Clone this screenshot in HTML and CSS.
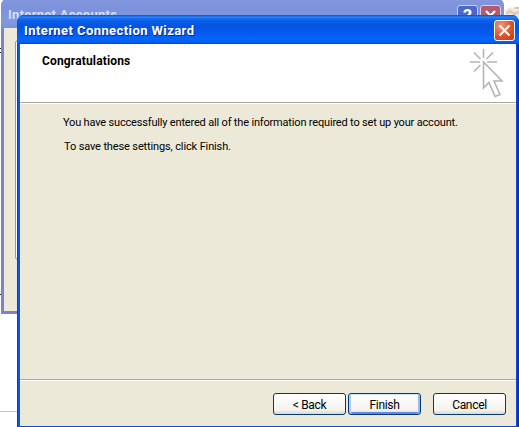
FILE: index.html
```
<!DOCTYPE html>
<html lang="en">
<head>
    <meta charset="UTF-8">
    <title>Internet Connection Wizard</title>
    <link rel="stylesheet" href="styles.css">
</head>
<body>
    <div class="desktop">
        <div class="desktop__mark desktop__mark--top"></div>
        <div class="desktop__mark desktop__mark--mid"></div>
        <div class="desktop__rule"></div>
        <svg class="desktop__icon" width="17" height="18" viewBox="0 0 17 18">
            <path d="M0 8 L6 4 L12 7 L17 3 V14 H4 Z" fill="#f0e6d8"/>
            <path d="M2 11 L6 8 L10 11 L17 8 M10 5 L17 5" stroke="#d6c9b6" stroke-width="2" fill="none"/>
        </svg>

        <div class="window window--back">
            <div class="titlebar titlebar--inactive">
                <span class="titlebar__text">Internet Accounts</span>
                <span class="caption caption--help">?</span>
                <span class="caption caption--dim">
                    <svg width="19" height="19" viewBox="0 0 19 19"><path d="M5 5 L14 14 M14 5 L5 14" stroke="#fff" stroke-width="2.2"/></svg>
                </span>
            </div>
            <div class="accounts">
                <div class="accounts__tab"></div>
            </div>
        </div>

        <div class="window window--front">
            <div class="titlebar">
                <span class="titlebar__text">Internet Connection Wizard</span>
                <span class="caption caption--close">
                    <svg width="19" height="19" viewBox="0 0 19 19"><path d="M4.5 4.5 L14.5 14.5 M14.5 4.5 L4.5 14.5" stroke="#fff" stroke-width="2"/></svg>
                </span>
            </div>
            <div class="header">
                <h1 class="header__title">Congratulations</h1>
                <svg class="header__icon" width="34" height="50" viewBox="0 0 34 50" fill="none" stroke="#b4b4b4" stroke-width="1.6">
                    <path d="M13.5 0 V9 M0 13 H10 M17 13 H27 M4 3.5 L10.5 10 M23 3.5 L16.5 10 M4 22.5 L10.5 16"/>
                    <path d="M13.5 13 V39 L19 33.5 L25 47.5 L30 45.5 L24 32 H32 Z"/>
                </svg>
            </div>
            <div class="content">
                <p class="content__text content__text--first">You have successfully entered all of the information required to set up your account.</p>
                <p class="content__text content__text--save">To save these settings, click Finish.</p>
            </div>
            <div class="footer">
                <button class="button">&lt; Back</button>
                <button class="button button--default">Finish</button>
                <button class="button button--cancel">Cancel</button>
            </div>
        </div>
    </div>
</body>
</html>
```

FILE: styles.css
```
*, *::before, *::after {
    box-sizing: border-box;
}
body {
    margin: 0;
    background-color: #fff;
    font-family: Roboto, "Liberation Sans", sans-serif;
    font-size: 11px;
    color: #000;
}
.desktop {
    position: relative;
    width: 519px;
    height: 427px;
    overflow: hidden;
}
.desktop__mark {
    position: absolute;
    left: 0;
    width: 2px;
    height: 1px;
    background-color: #202030;
}
.desktop__mark--top {
    top: 48px;
    height: 5px;
    border-top: 1px solid #202030;
    border-bottom: 1px solid #202030;
    background-color: #fff;
}
.desktop__mark--mid {
    top: 294px;
}
.desktop__rule {
    position: absolute;
    left: 0;
    top: 411px;
    width: 17px;
    height: 1px;
    background-color: #c4c4c4;
}
.desktop__icon {
    position: absolute;
    left: 504px;
    top: 3px;
}
.window {
    position: absolute;
    display: flex;
    flex-direction: column;
}
.window--back {
    left: 1px;
    top: -2px;
    width: 503px;
    height: 316px;
    border: 3px solid #7b83cc;
    border-top: none;
    border-radius: 8px 8px 0 0;
    background-color: #7b83cc;
}
.window--front {
    left: 17px;
    top: 15px;
    width: 502px;
    height: 412px;
    padding: 0 3px 1px;
    border-radius: 7px 7px 0 0;
    background: linear-gradient(to right, #0831b8 0, #0a4bd8 1px, #1560e6 2px, #0a4bd0 3px, #0a4bd0 499px, #1244c8 500px, #0023a0 502px);
}
.titlebar {
    display: flex;
    align-items: center;
    height: 29px;
    flex-shrink: 0;
    margin: 0 -3px;
    padding: 2px 4px 0 7px;
    border-radius: 7px 7px 0 0;
    background: linear-gradient(#0a4ccc 0, #2a83f8 2px, #0b62ea 5px, #0554e0 10px, #0459ec 18px, #0366fb 24px, #0360f2 27px, #0048d0 29px);
}
.titlebar__text {
    flex: 1;
    padding-top: 1px;
    font-size: 13px;
    font-weight: bold;
    letter-spacing: 0.42px;
    line-height: 16px;
    white-space: nowrap;
    color: #fff;
    text-shadow: 1px 1px 0 #0a2a90;
}
.titlebar--inactive {
    align-items: flex-start;
    height: 30px;
    padding: 7px 3px 0 7px;
    border-radius: 8px 8px 0 0;
    background: linear-gradient(#8398dd, #7c92dc 12px, #8299e0 24px, #7b90d8);
}
.titlebar--inactive .titlebar__text {
    padding-top: 2px;
    letter-spacing: 0.28px;
    color: #d5e0f8;
    text-shadow: none;
}
.caption {
    display: flex;
    align-items: center;
    justify-content: center;
    width: 21px;
    height: 21px;
    border: 1px solid #fff;
    border-radius: 3px;
}
.caption--close {
    background: radial-gradient(circle at 30% 25%, #ee9878, #dd5130 55%, #c03b16);
}
.caption--help {
    margin-right: 2px;
    border-color: #c8d2f2;
    background-color: #4d68c8;
    color: #fff;
    font-size: 18px;
    font-weight: bold;
}
.caption--dim {
    border-color: #d8cfe8;
    background-color: #b25a70;
}
.accounts {
    flex: 1;
    padding: 12px 11px;
    background-color: #ece9d8;
}
.accounts__tab {
    height: 220px;
    border: 1px solid #919b9c;
    border-radius: 3px;
    background-color: #fcfcfa;
}
.header {
    display: flex;
    justify-content: space-between;
    flex-shrink: 0;
    height: 59px;
    padding: 5px 12px 0 22px;
    border-bottom: 1px solid #aca899;
    background-color: #fff;
}
.header__title {
    margin: 4px 0 0;
    font-size: 12px;
    font-weight: bold;
    line-height: 16px;
    letter-spacing: 0.15px;
}
.content {
    flex: 1;
    padding: 11px 43px 0;
    border-top: 1px solid #fff;
    background-color: #ece9d8;
}
.content__text {
    margin: 0 0 8px;
    line-height: 16px;
    white-space: nowrap;
}
.content__text--first {
    letter-spacing: -0.175px;
}
.content__text--save {
    padding-left: 1px;
    letter-spacing: -0.13px;
}
.footer {
    display: flex;
    flex-shrink: 0;
    height: 47px;
    padding: 13px 10px 0 253px;
    border-top: 1px solid #aca899;
    background-color: #ece9d8;
    box-shadow: inset 0 1px 0 #fff;
}
.button {
    width: 73px;
    height: 22px;
    margin-right: 2px;
    padding: 2px 0 0;
    border: 1px solid #003c74;
    border-radius: 3px;
    background: linear-gradient(#fff, #f4f3ee 80%, #dcd7cc);
    font-family: inherit;
    font-size: 12px;
    letter-spacing: -0.3px;
    color: #000;
}
.button--default {
    box-shadow: inset 0 1px 0 #cee7ff, inset 2px 0 0 #b4caf0, inset -2px 0 0 #9ab6ea, inset 0 -2px 0 #6982ee;
}
.button--cancel {
    margin: 0 0 0 10px;
}
```
